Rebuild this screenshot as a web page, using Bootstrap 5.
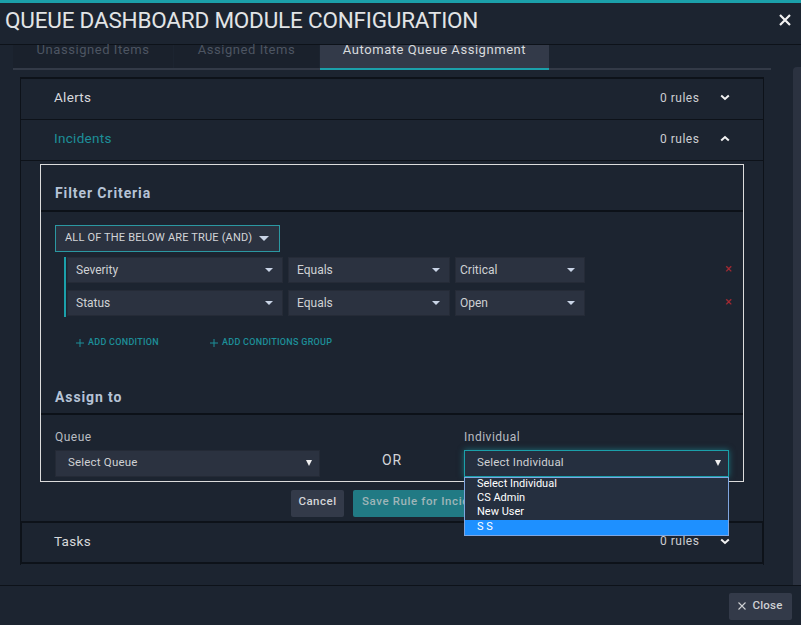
<!DOCTYPE html>
<html lang="en">
<head>
<meta charset="utf-8">
<title>Queue Dashboard Module Configuration</title>
<link href="https://cdn.jsdelivr.net/npm/bootstrap@5.3.0/dist/css/bootstrap.min.css" rel="stylesheet">
<style>
html,body{height:625px;overflow:hidden;background:#1c2430;}
body{font-family:Roboto,"Liberation Sans",sans-serif;color:#d3d5d8;font-size:12px;letter-spacing:.5px;}
.shell{width:801px;height:625px;border-top:3px solid #1ba0aa;background:#1c2430;position:relative;}
.head{height:42px;padding:0 10px 7px 5px;border-bottom:1px solid #0d1219;}
.head-title{font-size:22.5px;font-weight:400;color:#e2e4e6;letter-spacing:-.2px;line-height:1;}
.body-zone{height:540px;position:relative;}
.scroll-thumb{position:absolute;left:793px;top:22px;width:8px;height:518px;background:#2b3240;border-radius:4px 0 0 0;}
.tabs-row{margin-left:13px;width:758px;height:25px;border-bottom:2px solid #333a47;}
.tab-item{height:23px;font-size:13px;text-align:center;line-height:9px;color:#4d5562;background:#1a212c;letter-spacing:.55px;}
.tab-a{width:160px;margin-right:1px;}
.tab-b{width:145px;margin-right:1px;}
.tab-c{width:229px;height:25px;background:#333a49;color:#d9dbde;border-bottom:2px solid #1ba0aa;}
.acc-shell{margin:7px 0 0 20px;width:744px;height:488px;border-left:1px solid #0d1219;border-right:1px solid #0d1219;position:relative;}
.acc-row{height:41px;padding:0 33px 3px 33px;border-bottom:1px solid #0d1219;}
.acc-first{border-top:2px solid #0d1219;height:43px;}
.acc-name{font-size:13.5px;color:#d7d9dc;letter-spacing:.3px;}
.acc-active{color:#1c8f99;}
.acc-right{width:70px;font-size:12px;color:#ccced2;}
.chev{display:block;}
.panel-box{margin:3px 19px 0 19px;width:704px;height:318px;border:1px solid #dcdcdc;}
.panel-title{font-size:14px;font-weight:700;color:#b6c3d6;letter-spacing:.9px;padding-left:14px;height:47px;padding-top:20px;line-height:16px;border-bottom:2px solid #0c1118;}
.all-btn{margin:13px 0 0 14px;width:225px;height:27px;border:1px solid #2b98a2;border-radius:0;background:#2b3240;color:#d3d5d8;font-size:11px;padding:0 10px 0 9px;letter-spacing:.17px;}
.all-btn:hover{background:#2b3240;color:#d3d5d8;border-color:#2b98a2;}
.dropdown-toggle::after{margin-left:0;border-top:.38em solid #c9d4e6;border-right:.36em solid transparent;border-left:.36em solid transparent;border-bottom:0;}
.all-btn.dropdown-toggle::after{border-top-width:5px;border-left-width:5px;border-right-width:5px;}
.cond-group{margin:5px 0 0 23px;border-left:2px solid #1ba0aa;padding-left:1px;width:522px;}
.cond-row{height:33px;gap:5px;position:relative;}
.cond-row+.cond-row{height:27px;}
.fld{height:26px;border:1px solid #252b37;border-radius:0;background:#2b3240;color:#cfd1d4;font-size:12px;padding:0 9px 0 8px;}
.fld:hover{background:#2b3240;color:#cfd1d4;border-color:#252b37;}
.fld-a{width:216px;}
.fld-b{width:162px;padding-right:9px;}
.fld-c{width:130px;padding:0 9px 0 4px;}
.x-mark{position:absolute;left:658px;top:5px;color:#a52a33;font-size:13px;line-height:1;}
.add-row{margin:19px 0 0 35px;height:14px;color:#1c8f99;font-size:9px;letter-spacing:.28px;font-weight:500;}
.add-one{width:134px;}
.assign-title{font-size:14px;font-weight:700;color:#b6c3d6;letter-spacing:.9px;padding:39px 0 0 14px;height:65px;line-height:16px;border-bottom:2px solid #0c1118;}
.assign-row{padding:15px 14px 0 14px;}
.assign-col{width:265px;}
.field-label{font-size:12px;color:#b9bcc2;line-height:14px;margin-bottom:6px;letter-spacing:.5px;}
.pick{height:27px;background:#2b3240;border:1px solid #242a36;color:#cfd1d4;font-size:11.5px;padding:0 7px 1px 12px;letter-spacing:.2px;}
.pick-focus{background:#252f3f;border-color:#1ba0aa;box-shadow:0 0 6px rgba(27,160,170,.6);}
.tri{width:0;height:0;border-top:6px solid #f0f0f0;border-left:3px solid transparent;border-right:3px solid transparent;}
.or-mark{width:144px;text-align:center;font-size:14px;color:#d3d5d8;padding-top:20px;letter-spacing:.9px;}
.pop-list{position:absolute;left:0;top:27px;width:265px;height:59px;background:#252f3f;border:1px solid #7fa6e0;color:#fff;z-index:5;font-size:11px;line-height:12px;letter-spacing:0;}
.pop-opt{height:14px;padding-left:12px;}
.pop-on{background:#1e90ff;height:15px;line-height:14px;}
.act-row{margin:8px 0 0 270px;gap:9px;height:27px;}
.act-cancel{width:53px;height:27px;padding:0 0 3px;background:#333a49;border:0;border-radius:2px;color:#d3d5d8;font-size:11.5px;font-weight:500;letter-spacing:.5px;}
.act-save{width:220px;height:27px;padding:0 0 3px 9px;background:#217a84;border:0;border-radius:2px;color:#9fb5b8;font-size:11.5px;font-weight:500;text-align:left;letter-spacing:.6px;white-space:nowrap;overflow:hidden;}
.acc-last{position:absolute;left:-1px;right:-1px;top:444px;height:43px;border:2px solid #0d1219;padding:0 32px 3px 32px;}
.foot{height:39px;border-top:1px solid #0d1219;padding:7px 9px 0 0;}
.close-btn{width:63px;height:27px;padding:0 0 1px;background:#333a49;border:0;border-radius:2px;color:#cfd1d4;font-size:11.5px;font-weight:500;letter-spacing:.2px;gap:6px;}
</style>
</head>
<body>
<div class="shell">
  <div class="head d-flex align-items-center justify-content-between">
    <div class="head-title">QUEUE DASHBOARD MODULE CONFIGURATION</div>
    <svg width="12" height="12" viewBox="0 0 12 12"><path d="M1 1l10 10M11 1L1 11" stroke="#f2f2f2" stroke-width="2.2"/></svg>
  </div>
  <div class="body-zone">
    <div class="scroll-thumb"></div>
    <div class="tabs-row d-flex align-items-start">
      <div class="tab-item tab-a">Unassigned Items</div>
      <div class="tab-item tab-b">Assigned Items</div>
      <div class="tab-item tab-c">Automate Queue Assignment</div>
    </div>
    <div class="acc-shell">
      <div class="acc-row acc-first d-flex align-items-center justify-content-between">
        <span class="acc-name">Alerts</span>
        <span class="acc-right d-flex align-items-center justify-content-between">0 rules
          <svg class="chev" width="10" height="7" viewBox="0 0 10 7"><path d="M1.2 1.5L5 5l3.8-3.5" fill="none" stroke="#f2f2f2" stroke-width="2"/></svg></span>
      </div>
      <div class="acc-row d-flex align-items-center justify-content-between">
        <span class="acc-name acc-active">Incidents</span>
        <span class="acc-right d-flex align-items-center justify-content-between">0 rules
          <svg class="chev" width="10" height="7" viewBox="0 0 10 7"><path d="M1.2 5.5L5 2l3.8 3.5" fill="none" stroke="#f2f2f2" stroke-width="2"/></svg></span>
      </div>
      <div class="panel-box">
        <div class="panel-title">Filter Criteria</div>
        <button type="button" class="btn all-btn dropdown-toggle d-flex align-items-center justify-content-between">ALL OF THE BELOW ARE TRUE (AND)</button>
        <div class="cond-group">
          <div class="cond-row d-flex align-items-start">
            <button type="button" class="btn fld fld-a dropdown-toggle d-flex align-items-center justify-content-between">Severity</button>
            <button type="button" class="btn fld fld-b dropdown-toggle d-flex align-items-center justify-content-between">Equals</button>
            <button type="button" class="btn fld fld-c dropdown-toggle d-flex align-items-center justify-content-between">Critical</button>
            <span class="x-mark">×</span>
          </div>
          <div class="cond-row d-flex align-items-start">
            <button type="button" class="btn fld fld-a dropdown-toggle d-flex align-items-center justify-content-between">Status</button>
            <button type="button" class="btn fld fld-b dropdown-toggle d-flex align-items-center justify-content-between">Equals</button>
            <button type="button" class="btn fld fld-c dropdown-toggle d-flex align-items-center justify-content-between">Open</button>
            <span class="x-mark">×</span>
          </div>
        </div>
        <div class="add-row d-flex align-items-center">
          <span class="add-one d-flex align-items-center gap-1"><svg width="8" height="8" viewBox="0 0 8 8"><path d="M4 0v8M0 4h8" stroke="#1c8f99" stroke-width="1"/></svg>ADD CONDITION</span>
          <span class="d-flex align-items-center gap-1"><svg width="8" height="8" viewBox="0 0 8 8"><path d="M4 0v8M0 4h8" stroke="#1c8f99" stroke-width="1"/></svg>ADD CONDITIONS GROUP</span>
        </div>
        <div class="assign-title">Assign to</div>
        <div class="assign-row d-flex">
          <div class="assign-col">
            <div class="field-label">Queue</div>
            <div class="pick d-flex align-items-center justify-content-between">Select Queue<span class="tri"></span></div>
          </div>
          <div class="or-mark">OR</div>
          <div class="assign-col">
            <div class="field-label">Individual</div>
            <div class="position-relative">
              <div class="pick pick-focus d-flex align-items-center justify-content-between">Select Individual<span class="tri"></span></div>
              <div class="pop-list">
                <div class="pop-opt">Select Individual</div>
                <div class="pop-opt">CS Admin</div>
                <div class="pop-opt">New User</div>
                <div class="pop-opt pop-on">S S</div>
              </div>
            </div>
          </div>
        </div>
      </div>
      <div class="act-row d-flex">
        <button type="button" class="btn act-cancel">Cancel</button>
        <button type="button" class="btn act-save">Save Rule for Incidents</button>
      </div>
      <div class="acc-last d-flex align-items-center justify-content-between">
        <span class="acc-name">Tasks</span>
        <span class="acc-right d-flex align-items-center justify-content-between">0 rules
          <svg class="chev" width="10" height="7" viewBox="0 0 10 7"><path d="M1.2 1.5L5 5l3.8-3.5" fill="none" stroke="#f2f2f2" stroke-width="2"/></svg></span>
      </div>
    </div>
  </div>
  <div class="foot d-flex justify-content-end">
    <button type="button" class="btn close-btn d-flex align-items-center justify-content-center">
      <svg width="8" height="8" viewBox="0 0 8 8"><path d="M.5.5l7 7M7.5.5l-7 7" stroke="#cfd1d4" stroke-width="1.1"/></svg>Close</button>
  </div>
</div>
<script src="https://cdn.jsdelivr.net/npm/bootstrap@5.3.0/dist/js/bootstrap.bundle.min.js"></script>
</body>
</html>
